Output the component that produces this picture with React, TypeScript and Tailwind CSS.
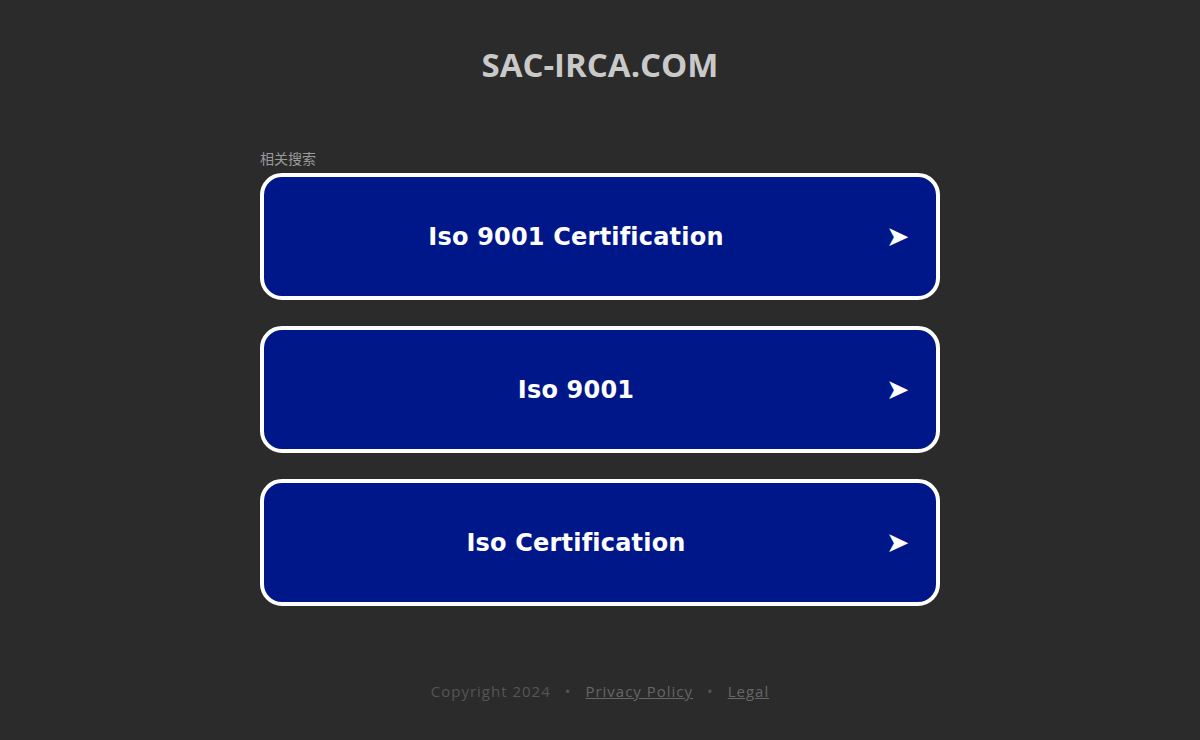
const links = ['Iso 9001 Certification', 'Iso 9001', 'Iso Certification']

function App() {
  return (
    <div className="min-h-screen bg-[#2b2b2b] flex flex-col items-center font-['Open_Sans',sans-serif]">
      <h1 className="mt-[43px] text-[33px] leading-[44px] font-bold text-[#c9c9c9]">SAC-IRCA.COM</h1>

      <div className="mt-[62px] w-[680px]">
        <div className="mb-[6px] text-[14px] leading-[18px] text-[#9a9a9a] font-['Noto_Sans_CJK_SC',sans-serif]">相关搜索</div>
        <div className="flex flex-col gap-[26px]">
          {links.map((l) => (
            <a
              key={l}
              href="#"
              className="h-[127px] rounded-[22px] border-4 border-white bg-[#001789] flex items-center pl-[22px] pr-[30px]"
            >
              <span className="flex-1 text-center text-white font-bold text-[24px] tracking-[0.2px] font-['DejaVu_Sans',Verdana,sans-serif]">
                {l}
              </span>
              <span className="ml-[20px] w-[20px] text-white text-[28px] leading-none font-['DejaVu_Sans',sans-serif]">➤</span>
            </a>
          ))}
        </div>
      </div>

      <footer className="mt-[74px] text-[15px] text-[#555555] tracking-[1px] flex items-center gap-[14px]">
        <span>Copyright 2024</span>
        <span>•</span>
        <a href="#" className="underline text-[#666666]">Privacy Policy</a>
        <span>•</span>
        <a href="#" className="underline text-[#666666]">Legal</a>
      </footer>
    </div>
  )
}

export default App
